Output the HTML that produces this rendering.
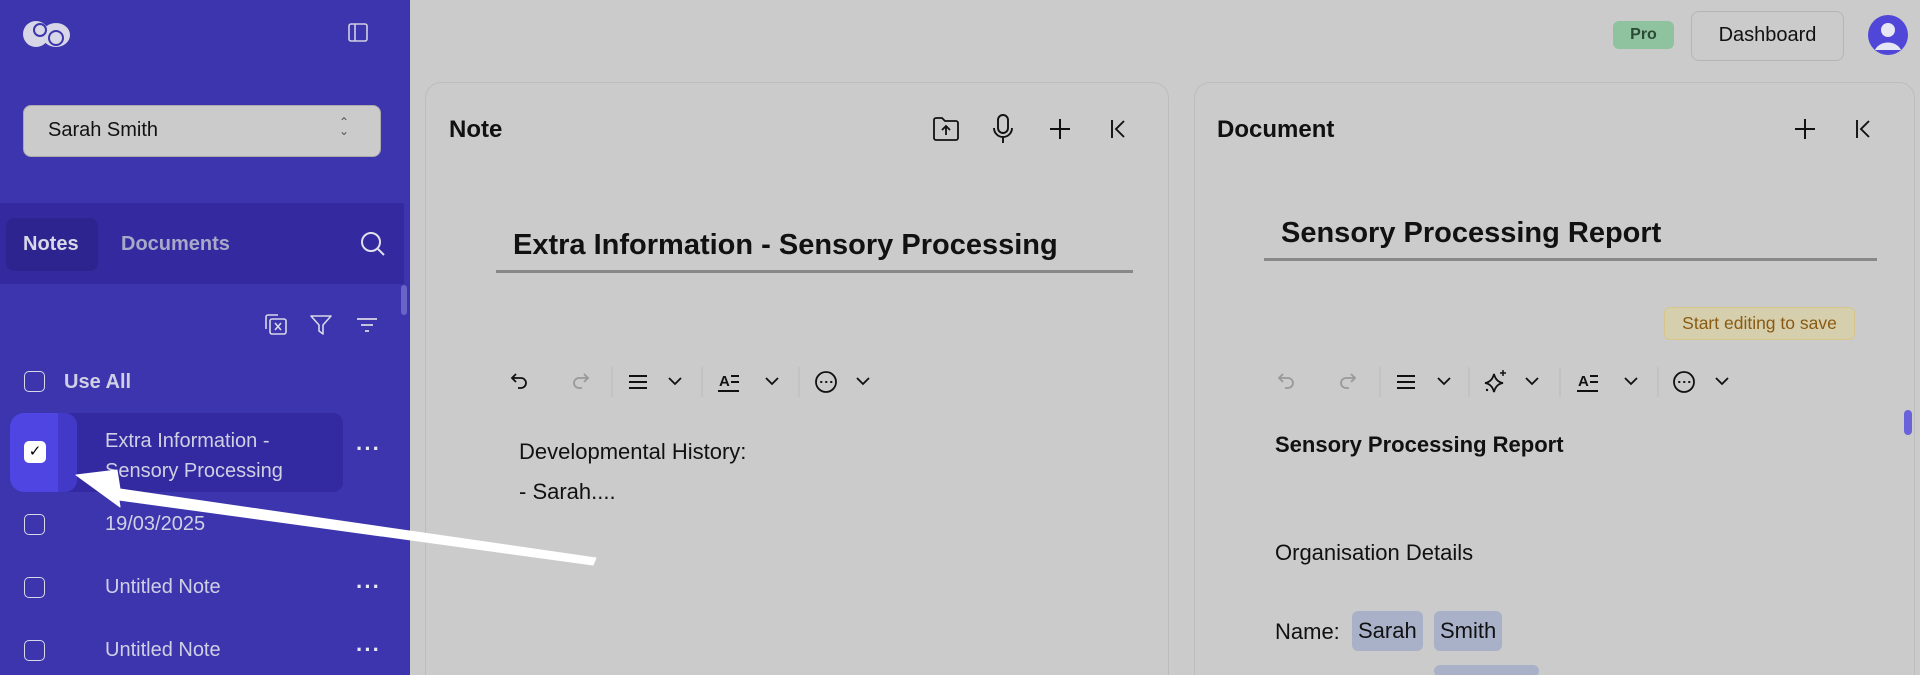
<!DOCTYPE html>
<html><head><meta charset="utf-8"><style>
*{box-sizing:border-box;margin:0;padding:0}
html{width:1920px;height:675px;overflow:hidden}
body{width:1920px;height:675px;overflow:hidden;background:#cbcbcb;font-family:"Liberation Sans",sans-serif;position:relative}
.a{position:absolute}
.sb{left:0;top:0;width:410px;height:675px;background:#3c35ae}
.t{position:absolute;white-space:nowrap}
.cb{position:absolute;width:21px;height:21px;border:1.5px solid #d8d8e8;border-radius:5px}
.dots{position:absolute;color:#e8e8f0;font-size:22px;font-weight:bold;letter-spacing:1px}
.panel{position:absolute;top:82px;height:610px;border:1.5px solid #bdbdbd;border-radius:16px;background:#cbcbcb}
svg{position:absolute;overflow:visible}
.chip{position:absolute;background:#a9b1c9;border-radius:6px;font-size:22px;color:#111;padding:6px 6px}
</style></head><body>
<div class="a sb"></div>
<svg style="left:22px;top:18px" width="50" height="32" viewBox="0 0 50 32">
<ellipse cx="14" cy="16" rx="13" ry="13" fill="#d6d6e6"/><ellipse cx="34" cy="17" rx="14" ry="12" fill="#d6d6e6"/>
<circle cx="18" cy="12" r="6" fill="none" stroke="#3c35ae" stroke-width="2"/><circle cx="34" cy="20" r="7" fill="none" stroke="#3c35ae" stroke-width="2"/></svg>
<svg style="left:348px;top:23px" width="20" height="20" viewBox="0 0 20 20"><rect x="1" y="1" width="18" height="17" rx="2" fill="none" stroke="#d0d0e0" stroke-width="1.6"/><line x1="7" y1="1" x2="7" y2="18" stroke="#d0d0e0" stroke-width="1.6"/></svg>
<div class="a" style="left:23px;top:105px;width:358px;height:52px;background:#cbcbcb;border-radius:8px;border:1px solid #aaa"></div>
<div class="t" style="left:48px;top:119px;font-size:20px;color:#111">Sarah Smith</div>
<div class="t" style="left:339px;top:118px;font-size:12px;color:#555;line-height:9px">&#8963;<br>&#8964;</div>
<div class="a" style="left:0;top:203px;width:404px;height:81px;background:#3529a0"></div>
<div class="a" style="left:6px;top:218px;width:92px;height:53px;background:#2d2490;border-radius:8px"></div>
<div class="t" style="left:23px;top:233px;font-size:20px;color:#d8d8e8;font-weight:bold">Notes</div>
<div class="t" style="left:121px;top:233px;font-size:20px;color:#a8a8c8;font-weight:bold">Documents</div>
<svg style="left:360px;top:231px" width="26" height="26" viewBox="0 0 26 26"><circle cx="11" cy="11" r="9" fill="none" stroke="#e0e0ee" stroke-width="2"/><line x1="18" y1="18" x2="24" y2="24" stroke="#e0e0ee" stroke-width="2"/></svg>
<div class="a" style="left:401px;top:285px;width:6px;height:30px;background:#6b64c8;border-radius:3px"></div>
<svg style="left:264px;top:314px" width="24" height="22" viewBox="0 0 24 22"><path d="M2 15V3a2 2 0 0 1 2-2h10" fill="none" stroke="#d8d8e8" stroke-width="1.6"/><rect x="6" y="5" width="16" height="15" rx="2" fill="none" stroke="#d8d8e8" stroke-width="1.6"/><path d="M11 9l6 7M17 9l-6 7" stroke="#d8d8e8" stroke-width="1.6"/></svg>
<svg style="left:310px;top:314px" width="22" height="22" viewBox="0 0 22 22"><path d="M1 2h20l-8 9v9l-4-3v-6z" fill="none" stroke="#d8d8e8" stroke-width="1.6" stroke-linejoin="round"/></svg>
<svg style="left:356px;top:317px" width="22" height="16" viewBox="0 0 22 16"><path d="M1 2h20M5 8h12M9 14h4" stroke="#d8d8e8" stroke-width="1.8"/></svg>
<div class="cb" style="left:24px;top:371px"></div>
<div class="t" style="left:64px;top:371px;font-size:20px;color:#d0d0e4;font-weight:bold">Use All</div>
<div class="a" style="left:59px;top:413px;width:284px;height:79px;background:#3329a0;border-radius:10px"></div>
<div class="a" style="left:10px;top:413px;width:67px;height:79px;background:#4f45e2;border-radius:14px"></div>
<div class="a" style="left:58px;top:413px;width:19px;height:79px;background:#4339c8;border-radius:0 12px 12px 0"></div>
<div class="a" style="left:24px;top:441px;width:22px;height:22px;background:#fff;border-radius:5px;color:#000;font-size:15px;text-align:center;line-height:22px">&#10003;</div>
<div class="t" style="left:105px;top:426px;font-size:20px;color:#d0d0e4;line-height:30px">Extra Information -<br>Sensory Processing</div>
<div class="dots" style="left:356px;top:436px">···</div>
<div class="cb" style="left:24px;top:514px"></div>
<div class="t" style="left:105px;top:513px;font-size:20px;color:#d0d0e4">19/03/2025</div>
<div class="cb" style="left:24px;top:577px"></div>
<div class="t" style="left:105px;top:576px;font-size:20px;color:#d0d0e4">Untitled Note</div>
<div class="dots" style="left:356px;top:574px">···</div>
<div class="cb" style="left:24px;top:640px"></div>
<div class="t" style="left:105px;top:639px;font-size:20px;color:#d0d0e4">Untitled Note</div>
<div class="dots" style="left:356px;top:637px">···</div>

<div class="a" style="left:1613px;top:21px;width:61px;height:28px;background:#8fc29f;border-radius:6px;font-size:16px;font-weight:bold;color:#2b4a35;text-align:center;line-height:28px">Pro</div>
<div class="a" style="left:1691px;top:11px;width:153px;height:50px;border:1.5px solid #b5b5b5;border-radius:8px;font-size:20px;color:#111;text-align:center;line-height:47px">Dashboard</div>
<svg style="left:1867px;top:14px" width="42" height="42" viewBox="0 0 42 42"><circle cx="21" cy="21" r="20" fill="#5047d8"/><circle cx="21" cy="16" r="7" fill="#e6e6f4"/><path d="M8 36a14 12 0 0 1 26 0" fill="#e6e6f4"/></svg>

<div class="panel" style="left:425px;width:744px"></div>
<div class="t" style="left:449px;top:116px;font-size:24px;font-weight:bold;color:#111">Note</div>
<svg style="left:932px;top:116px" width="28" height="26" viewBox="0 0 28 26"><path d="M2 4a2 2 0 0 1 2-2h6l3 3h11a2 2 0 0 1 2 2v15a2 2 0 0 1-2 2H4a2 2 0 0 1-2-2z" fill="none" stroke="#111" stroke-width="1.8"/><path d="M14 19v-9M10 14l4-4 4 4" fill="none" stroke="#111" stroke-width="1.8"/></svg>
<svg style="left:993px;top:114px" width="20" height="30" viewBox="0 0 20 30"><rect x="5" y="1" width="10" height="18" rx="5" fill="none" stroke="#111" stroke-width="1.9"/><path d="M1 14a9 9 0 0 0 18 0M10 23v6" fill="none" stroke="#111" stroke-width="1.9"/></svg>
<svg style="left:1050px;top:119px" width="20" height="20"><path d="M10 0v20M0 10h20" stroke="#111" stroke-width="2"/></svg>
<svg style="left:1110px;top:120px" width="18" height="18"><path d="M2 0v18M14 1l-8 8 8 8" fill="none" stroke="#111" stroke-width="1.9"/></svg>
<div class="t" style="left:513px;top:229px;font-size:29px;font-weight:bold;color:#111">Extra Information - Sensory Processing</div>
<div class="a" style="left:496px;top:270px;width:637px;height:3px;background:#888"></div>
<svg style="left:510px;top:370px;overflow:visible" width="360" height="24">
<path d="M6 4L2 8l4 4M2 8h9a5 5 0 0 1 0 10h-3" fill="none" stroke="#111" stroke-width="1.8"/>
<path d="M74 4l4 4-4 4M78 8h-9a5 5 0 0 0 0 10h3" fill="none" stroke="#999" stroke-width="1.8"/>
<line x1="102" y1="-3" x2="102" y2="27" stroke="#bbb" stroke-width="1"/>
<path d="M119 6h18M119 12h18M119 18h18" stroke="#111" stroke-width="2"/>
<path d="M159 8l6 6 6-6" fill="none" stroke="#111" stroke-width="1.8"/>
<line x1="192" y1="-3" x2="192" y2="27" stroke="#bbb" stroke-width="1"/>
<text x="209" y="16" font-family="Liberation Sans" font-size="15" font-weight="bold" fill="#111">A</text><path d="M221 6h8M221 12h8M208 21h21" stroke="#111" stroke-width="2"/>
<path d="M256 8l6 6 6-6" fill="none" stroke="#111" stroke-width="1.8"/>
<line x1="289" y1="-3" x2="289" y2="27" stroke="#bbb" stroke-width="1"/>
<circle cx="316" cy="12" r="10" fill="none" stroke="#111" stroke-width="1.8"/><path d="M311 12h.5M316 12h.5M321 12h.5" stroke="#111" stroke-width="2" stroke-linecap="round"/>
<path d="M347 8l6 6 6-6" fill="none" stroke="#111" stroke-width="1.8"/>
</svg>
<div class="t" style="left:519px;top:432px;font-size:22px;color:#111;line-height:40px">Developmental History:<br>- Sarah....</div>

<div class="panel" style="left:1194px;width:721px"></div>
<div class="t" style="left:1217px;top:116px;font-size:24px;font-weight:bold;color:#111">Document</div>
<svg style="left:1795px;top:119px" width="20" height="20"><path d="M10 0v20M0 10h20" stroke="#111" stroke-width="2"/></svg>
<svg style="left:1855px;top:120px" width="18" height="18"><path d="M2 0v18M14 1l-8 8 8 8" fill="none" stroke="#111" stroke-width="1.9"/></svg>
<div class="t" style="left:1281px;top:217px;font-size:29px;font-weight:bold;color:#111">Sensory Processing Report</div>
<div class="a" style="left:1264px;top:258px;width:613px;height:3px;background:#888"></div>
<div class="a" style="left:1664px;top:307px;width:191px;height:33px;background:#d6cfae;border:1.5px solid #d8c688;border-radius:6px;font-size:17.5px;color:#8a5a10;text-align:center;line-height:30px">Start editing to save</div>
<svg style="left:1277px;top:370px;overflow:visible" width="460" height="24">
<path d="M6 4L2 8l4 4M2 8h9a5 5 0 0 1 0 10h-3" fill="none" stroke="#999" stroke-width="1.8"/>
<path d="M74 4l4 4-4 4M78 8h-9a5 5 0 0 0 0 10h3" fill="none" stroke="#999" stroke-width="1.8"/>
<line x1="103" y1="-3" x2="103" y2="27" stroke="#bbb" stroke-width="1"/>
<path d="M120 6h18M120 12h18M120 18h18" stroke="#111" stroke-width="2"/>
<path d="M161 8l6 6 6-6" fill="none" stroke="#111" stroke-width="1.8"/>
<line x1="192" y1="-3" x2="192" y2="27" stroke="#bbb" stroke-width="1"/>
<path d="M217 4q2 8 9 9q-7 1-9 9q-2-8-9-9q7-1 9-9z" fill="none" stroke="#111" stroke-width="1.8"/><path d="M226 0v6M223 3h6" stroke="#111" stroke-width="1.5"/><circle cx="210" cy="20" r="1.2" fill="#111"/>
<path d="M249 8l6 6 6-6" fill="none" stroke="#111" stroke-width="1.8"/>
<line x1="283" y1="-3" x2="283" y2="27" stroke="#bbb" stroke-width="1"/>
<text x="301" y="16" font-family="Liberation Sans" font-size="15" font-weight="bold" fill="#111">A</text><path d="M313 6h8M313 12h8M300 21h21" stroke="#111" stroke-width="2"/>
<path d="M348 8l6 6 6-6" fill="none" stroke="#111" stroke-width="1.8"/>
<line x1="381" y1="-3" x2="381" y2="27" stroke="#bbb" stroke-width="1"/>
<circle cx="407" cy="12" r="10" fill="none" stroke="#111" stroke-width="1.8"/><path d="M402 12h.5M407 12h.5M412 12h.5" stroke="#111" stroke-width="2" stroke-linecap="round"/>
<path d="M439 8l6 6 6-6" fill="none" stroke="#111" stroke-width="1.8"/>
</svg>
<div class="a" style="left:1904px;top:410px;width:8px;height:25px;background:#6a62d8;border-radius:4px"></div>
<div class="t" style="left:1275px;top:432px;font-size:22px;font-weight:bold;color:#111">Sensory Processing Report</div>
<div class="t" style="left:1275px;top:540px;font-size:22px;color:#111">Organisation Details</div>
<div class="t" style="left:1275px;top:619px;font-size:22px;color:#111">Name:</div>
<div class="chip" style="left:1352px;top:611px;height:40px;line-height:28px">Sarah</div>
<div class="chip" style="left:1434px;top:611px;height:40px;line-height:28px">Smith</div>
<div class="chip" style="left:1434px;top:665px;width:105px;height:10px"></div>

<svg style="left:0;top:0" width="1920" height="675"><path d="M76 475L117 470L120 489L596 558L593 565L119 500L120 507Z" fill="#fff" stroke="#fff" stroke-width="1" stroke-linejoin="round"/></svg>
</body></html>
